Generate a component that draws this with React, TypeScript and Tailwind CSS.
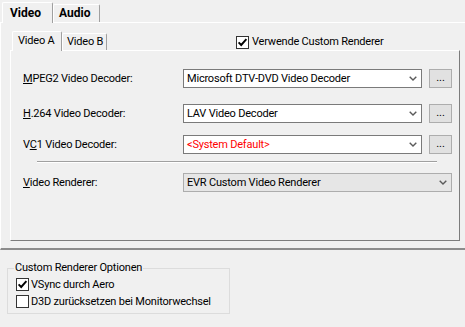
function Check({ checked }: { checked?: boolean }) {
  return (
    <span className="flex h-[13px] w-[13px] shrink-0 items-center justify-center border border-[#333333] bg-white">
      {checked && (
        <svg width="11" height="11" viewBox="0 0 11 11">
          <path d="M1.6 5.4 L4.2 8 L9.4 2.2" fill="none" stroke="#000" strokeWidth="1.9" />
        </svg>
      )}
    </span>
  )
}

function Chevron() {
  return (
    <svg width="8" height="5" viewBox="0 0 8 5" className="shrink-0">
      <path d="M0.7 0.7 L4 4 L7.3 0.7" fill="none" stroke="#5a5a5a" strokeWidth="1.4" />
    </svg>
  )
}

function Combo({ text, red, flat }: { text: string; red?: boolean; flat?: boolean }) {
  const box = flat
    ? 'w-[269px] border-[#adadad] bg-[#e6e6e6]'
    : 'w-[239px] border-[#7a7a7a] bg-white'
  return (
    <div className={`flex h-[19px] items-center justify-between border pl-[3px] pr-[4px] ${box}`}>
      <span className={red ? 'text-[#ff0000]' : 'text-black'}>{text}</span>
      <Chevron />
    </div>
  )
}

function Dots() {
  return (
    <div className="ml-[7px] flex h-[19px] w-[23px] items-center justify-center border border-[#adadad] bg-[#e1e1e1] pb-[2px] tracking-normal">
      ...
    </div>
  )
}

function Row({ label, combo }: { label: React.ReactNode; combo: React.ReactNode }) {
  return (
    <div className="flex h-[19px] items-center">
      <span className="w-[160px] shrink-0">{label}</span>
      {combo}
    </div>
  )
}

export default function App() {
  return (
    <div className="h-[327px] w-[465px] overflow-hidden whitespace-nowrap bg-[#f0f0f0] font-['Roboto',sans-serif] text-[11px] leading-[16px] tracking-[-0.2px] text-black">
      {/* outer tabs */}
      <div className="flex h-[22px] items-end pl-[2px]">
        <div className="relative z-10 -mb-px h-[21px] w-[51px] rounded-t-[2px] border border-b-0 border-white border-r-[#a0a0a0] bg-[#f0f0f0] pl-[7px] pt-[2px] text-[12px] font-bold tracking-normal">
          Video
        </div>
        <div className="h-[18px] w-[47px] rounded-t-[2px] border border-b-0 border-white border-r-[#a0a0a0] pl-[5px] text-[12px] font-bold tracking-normal">
          Audio
        </div>
      </div>

      {/* outer panel */}
      <div className="h-[228px] w-[480px] border-l border-t border-b-2 border-white border-b-[#8c8c8c] pl-[9px] pt-[8px]">
        {/* inner tabs + option */}
        <div className="flex h-[19px] items-end pl-[2px]">
          <div className="relative z-10 -mb-px h-[20px] w-[50px] rounded-t-[2px] border border-b-0 border-white border-r-[#a0a0a0] bg-[#f0f0f0] pl-[5px] pt-[1px]">
            Video A
          </div>
          <div className="h-[17px] w-[45px] rounded-t-[2px] border border-b-0 border-white border-r-[#a0a0a0] pl-[4px]">
            Video B
          </div>
          <label className="ml-[129px] flex items-center gap-[3px] self-start pt-[3px]">
            <Check checked />
            <span>Verwende Custom Renderer</span>
          </label>
        </div>

        {/* inner panel */}
        <div className="h-[191px] w-[450px] border border-white border-b-[#7c7c7c] border-r-[#7c7c7c] pl-[12px] pt-[18px]">
          <Row
            label={<><u>M</u>PEG2 Video Decoder:</>}
            combo={<><Combo text="Microsoft DTV-DVD Video Decoder" /><Dots /></>}
          />
          <div className="mt-[16px]">
            <Row
              label={<><u>H</u>.264 Video Decoder:</>}
              combo={<><Combo text="LAV Video Decoder" /><Dots /></>}
            />
          </div>
          <div className="mt-[12px]">
            <Row
              label={<>V<u>C</u>1 Video Decoder:</>}
              combo={<><Combo text="<System Default>" red /><Dots /></>}
            />
          </div>
          <div className="ml-[14px] mt-[7px] w-[400px] border-b border-t border-b-white border-t-[#a0a0a0]" />
          <div className="mt-[10px]">
            <Row
              label={<><u>V</u>ideo Renderer:</>}
              combo={<Combo text="EVR Custom Video Renderer" flat />}
            />
          </div>
        </div>
      </div>

      {/* group box */}
      <fieldset className="ml-[7px] mt-[10px] w-[223px] border border-[#dcdcdc] pb-[3px]">
        <legend className="ml-[6px] px-[1px]">Custom Renderer Optionen</legend>
        <div className="flex h-[17px] items-center gap-[2px] pl-[8px]">
          <Check checked />
          <span>VSync durch Aero</span>
        </div>
        <div className="flex h-[17px] items-center gap-[2px] pl-[8px]">
          <Check />
          <span>D3D zurücksetzen bei Monitorwechsel</span>
        </div>
      </fieldset>
    </div>
  )
}
